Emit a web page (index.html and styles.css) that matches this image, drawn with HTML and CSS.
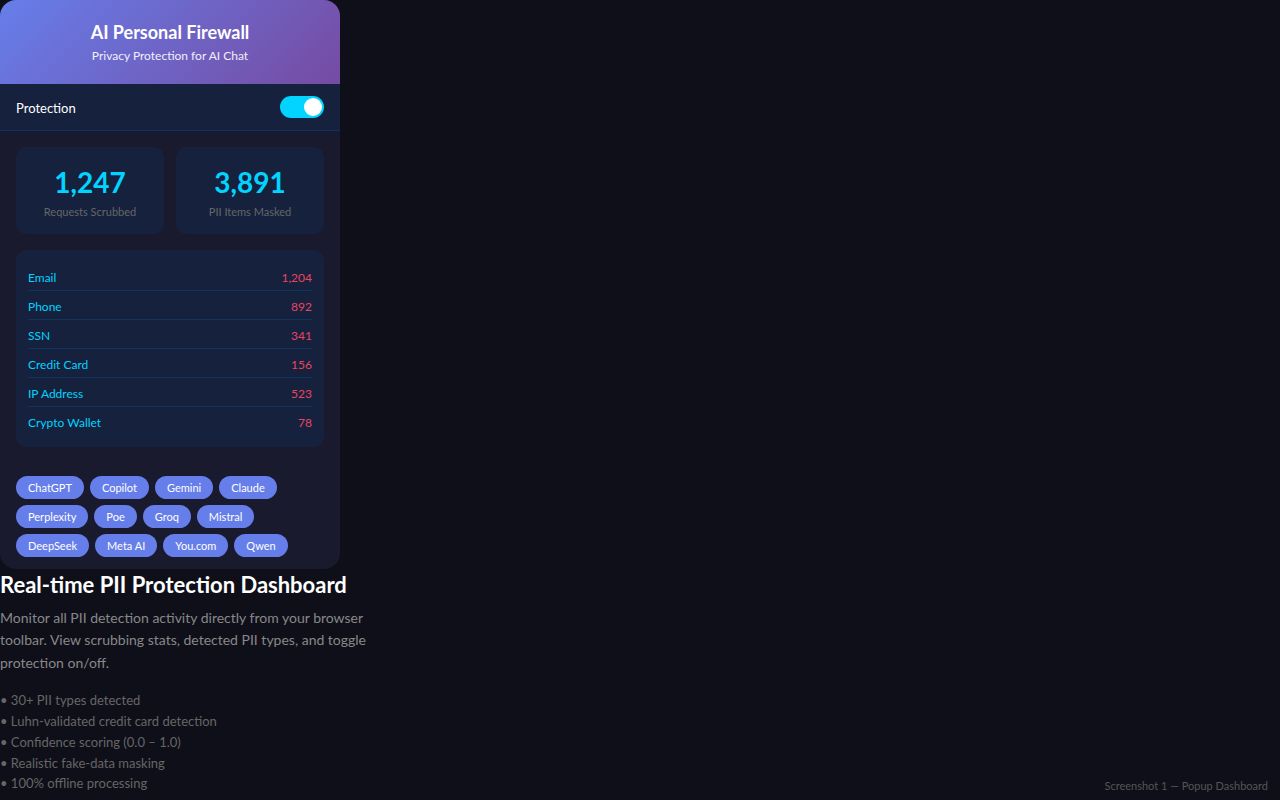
FILE: index.html
```html
<!DOCTYPE html>
<html lang="en">
<head>
    <meta charset="UTF-8">
    <meta name="viewport" content="width=device-width, initial-scale=1.0">
    <title>AI Personal Firewall - Popup Dashboard</title>
    <link rel="stylesheet" href="styles.css">
</head>
<body>
    <div class="shot">
        <!-- popup -->
        <div class="popup">
            <div class="popup-header">
                <h1>AI Personal Firewall</h1>
                <p>Privacy Protection for AI Chat</p>
            </div>

            <div class="toggle-row">
                <span class="toggle-label">Protection</span>
                <span class="switch on"><span class="knob"></span></span>
            </div>

            <div class="popup-body">
                <div class="stats">
                    <div class="stat-card">
                        <div class="stat-num">1,247</div>
                        <div class="stat-label">Requests Scrubbed</div>
                    </div>
                    <div class="stat-card">
                        <div class="stat-num">3,891</div>
                        <div class="stat-label">PII Items Masked</div>
                    </div>
                </div>

                <div class="pii-list">
                    <div class="pii-row"><span>Email</span><span class="count">1,204</span></div>
                    <div class="pii-row"><span>Phone</span><span class="count">892</span></div>
                    <div class="pii-row"><span>SSN</span><span class="count">341</span></div>
                    <div class="pii-row"><span>Credit Card</span><span class="count">156</span></div>
                    <div class="pii-row"><span>IP Address</span><span class="count">523</span></div>
                    <div class="pii-row"><span>Crypto Wallet</span><span class="count">78</span></div>
                </div>
            </div>

            <div class="sites">
                <span class="chip">ChatGPT</span>
                <span class="chip">Copilot</span>
                <span class="chip">Gemini</span>
                <span class="chip">Claude</span>
                <span class="chip">Perplexity</span>
                <span class="chip">Poe</span>
                <span class="chip">Groq</span>
                <span class="chip">Mistral</span>
                <span class="chip">DeepSeek</span>
                <span class="chip">Meta AI</span>
                <span class="chip">You.com</span>
                <span class="chip">Qwen</span>
            </div>
        </div>

        <!-- description -->
        <div class="desc">
            <h2>Real-time PII Protection Dashboard</h2>
            <p>Monitor all PII detection activity directly from your browser toolbar. View scrubbing stats, detected PII types, and toggle protection on/off.</p>
            <ul class="features">
                <li>• 30+ PII types detected</li>
                <li>• Luhn-validated credit card detection</li>
                <li>• Confidence scoring (0.0 – 1.0)</li>
                <li>• Realistic fake-data masking</li>
                <li>• 100% offline processing</li>
            </ul>
        </div>
    </div>

    <div class="caption">Screenshot 1 — Popup Dashboard</div>
</body>
</html>
```

FILE: styles.css
```css
* {
    box-sizing: border-box;
    margin: 0;
    padding: 0;
}
body {
    font-family: "Segoe UI", Lato, sans-serif;
    background-color: #0f0f1a;
    color: #e0e0e0;
    width: 1280px;
    height: 800px;
    overflow: hidden;
    position: relative;
}
.shot {
    width: 380px;
}
.popup {
    width: 340px;
    background-color: #1a1a2e;
    border-radius: 16px;
    overflow: hidden;
}
.popup-header {
    height: 84px;
    padding-top: 20px;
    text-align: center;
    background: linear-gradient(135deg, #667eea 0%, #764ba2 100%);
    color: white;
}
.popup-header h1 {
    font-size: 18px;
    font-weight: 700;
    line-height: 24px;
}
.popup-header p {
    font-size: 12px;
    line-height: 16px;
    margin-top: 4px;
    opacity: 0.9;
}
.toggle-row {
    display: flex;
    justify-content: space-between;
    align-items: center;
    height: 47px;
    padding: 0 16px;
    background-color: #16213e;
    border-bottom: 1px solid #0f3460;
    font-size: 13px;
    color: white;
}
.toggle-label {
    padding-top: 2px;
}
.switch {
    width: 44px;
    height: 22px;
    border-radius: 11px;
    background-color: #00d4ff;
    position: relative;
}
.knob {
    position: absolute;
    top: 2px;
    right: 2px;
    width: 18px;
    height: 18px;
    border-radius: 50%;
    background-color: white;
}
.popup-body {
    padding: 16px 16px 0;
}
.stats {
    display: grid;
    grid-template-columns: 1fr 1fr;
    gap: 12px;
    margin-bottom: 16px;
}
.stat-card {
    height: 87px;
    padding-top: 17px;
    background-color: #16213e;
    border-radius: 10px;
    text-align: center;
}
.stat-num {
    font-size: 28px;
    font-weight: 700;
    line-height: 36px;
    color: #00d4ff;
}
.stat-label {
    font-size: 11px;
    line-height: 14px;
    margin-top: 5px;
    color: #666;
}
.pii-list {
    background-color: #16213e;
    border-radius: 10px;
    padding: 12px;
}
.pii-row {
    display: flex;
    justify-content: space-between;
    height: 29px;
    align-items: center;
    padding-top: 3px;
    font-size: 12px;
    color: #00d4ff;
    border-bottom: 1px solid #0f3460;
}
.pii-row:last-child {
    border-bottom: none;
    height: 28px;
}
.pii-row .count {
    color: #e94560;
}
.sites {
    display: flex;
    flex-wrap: wrap;
    gap: 6px;
    padding: 29px 16px 12px;
}
.chip {
    height: 23px;
    line-height: 23px;
    padding: 0 12px;
    border-radius: 12px;
    background-color: #667eea;
    color: white;
    font-size: 11px;
}
.desc h2 {
    font-size: 22px;
    font-weight: 700;
    line-height: 32px;
    color: white;
}
.desc p {
    font-size: 14px;
    line-height: 22.4px;
    color: #888;
    margin-top: 6px;
}
.features {
    list-style: none;
    margin-top: 16px;
    font-size: 13px;
    line-height: 20.8px;
    color: #666;
}
.caption {
    position: absolute;
    right: 12px;
    bottom: 8px;
    font-size: 11px;
    color: #555;
}
```
